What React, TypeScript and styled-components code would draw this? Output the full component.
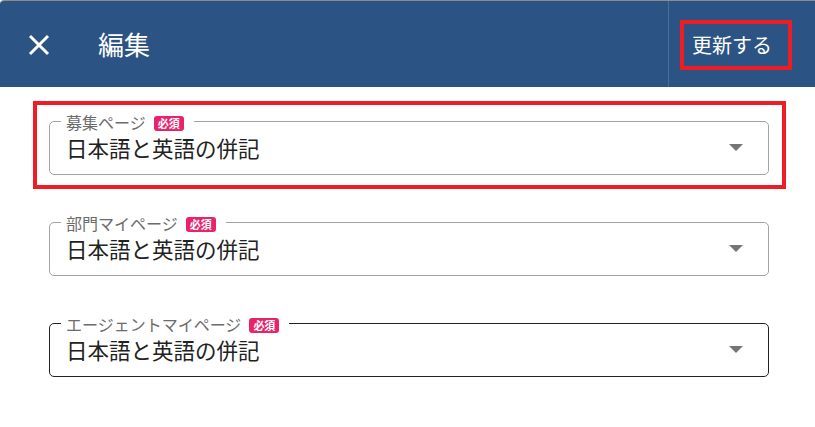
import React from "react";
import styled, { createGlobalStyle } from "styled-components";

const GlobalStyle = createGlobalStyle`
  html, body { margin: 0; padding: 0; background: #ffffff; }
  body { font-family: "Noto Sans CJK JP", "Noto Sans", sans-serif; }
  * { box-sizing: border-box; }
`;

const Dialog = styled.div`
  width: 815px;
  height: 427px;
  border-top: 1px solid #8c8c8c;
  border-top-left-radius: 4px;
  overflow: hidden;
  background: #ffffff;
`;

const Header = styled.header`
  display: flex;
  align-items: stretch;
  height: 86px;
  background: #2b5383;
  color: #ffffff;
`;

const HeaderLeft = styled.div`
  flex: 1;
  display: flex;
  align-items: center;
  padding-left: 28px;
`;

const CloseButton = styled.button`
  display: flex;
  align-items: center;
  justify-content: center;
  padding: 0;
  margin-top: 2px;
  border: none;
  background: transparent;
  cursor: pointer;
`;

const Title = styled.h1`
  margin: 0 0 0 48px;
  font-size: 26px;
  font-weight: 400;
  line-height: 1;
  letter-spacing: 0;
`;

const HeaderRight = styled.div`
  display: flex;
  align-items: center;
  border-left: 1px solid #4c6d99;
  padding: 2px 23px 0 11px;
`;

const UpdateButton = styled.button<{ $highlighted?: boolean }>`
  display: flex;
  align-items: center;
  width: 112px;
  height: 50px;
  padding: 0 0 0 8px;
  border: 4px solid ${(p) => (p.$highlighted ? "#ee1c25" : "transparent")};
  background: transparent;
  color: #ffffff;
  font-family: inherit;
  font-size: 20px;
  line-height: 1;
  cursor: pointer;
`;

const Content = styled.main`
  display: flex;
  flex-direction: column;
  gap: 13px;
  padding: 14px 0 0 33px;
`;

const FieldBlock = styled.div<{ $highlighted?: boolean }>`
  width: 753px;
  padding: 8px 13px 10px 12px;
  border: 4px solid ${(p) => (p.$highlighted ? "#ee1c25" : "transparent")};
`;

const Outline = styled.fieldset<{ $active?: boolean }>`
  margin: 0;
  min-width: 0;
  padding: 0 16px;
  border: 1px solid ${(p) => (p.$active ? "#222222" : "#a3a3a3")};
  border-radius: 5px;
`;

const Legend = styled.legend`
  display: flex;
  align-items: center;
  height: 16px;
  margin-left: -5px;
  padding: 0 10px 0 5px;
`;

const LabelText = styled.span`
  font-size: 16px;
  line-height: 16px;
  color: #6b6b6b;
  margin-top: 2px;
`;

const RequiredBadge = styled.span`
  display: inline-flex;
  align-items: center;
  justify-content: center;
  width: 30px;
  height: 15px;
  margin: 4px 0 0 8px;
  border-radius: 3px;
  background: #e8236a;
  color: #ffffff;
  font-size: 11px;
  font-weight: 700;
  line-height: 1;
`;

const SelectRow = styled.div`
  display: flex;
  align-items: center;
  justify-content: space-between;
  height: 37px;
  margin-bottom: 8px;
`;

const Value = styled.span`
  font-size: 21.5px;
  line-height: 1;
  color: #222222;
`;

const Arrow = styled.svg`
  width: 14px;
  height: 8px;
  margin-right: 9px;
  flex: none;
`;

type Field = { label: string; value: string; highlighted?: boolean; active?: boolean };

const fields: Field[] = [
  { label: "募集ページ", value: "日本語と英語の併記", highlighted: true },
  { label: "部門マイページ", value: "日本語と英語の併記" },
  { label: "エージェントマイページ", value: "日本語と英語の併記", active: true },
];

export default function App() {
  return (
    <>
      <GlobalStyle />
      <Dialog>
        <Header>
          <HeaderLeft>
            <CloseButton aria-label="閉じる">
              <svg width="22" height="22" viewBox="0 0 22 22">
                <path d="M2 2 L20 20 M20 2 L2 20" stroke="#ffffff" strokeWidth="3" fill="none" />
              </svg>
            </CloseButton>
            <Title>編集</Title>
          </HeaderLeft>
          <HeaderRight>
            <UpdateButton $highlighted>更新する</UpdateButton>
          </HeaderRight>
        </Header>
        <Content>
          {fields.map((f) => (
            <FieldBlock key={f.label} $highlighted={f.highlighted}>
              <Outline $active={f.active}>
                <Legend>
                  <LabelText>{f.label}</LabelText>
                  <RequiredBadge>必須</RequiredBadge>
                </Legend>
                <SelectRow>
                  <Value>{f.value}</Value>
                  <Arrow viewBox="0 0 14 8">
                    <path d="M0 0 L14 0 L7 7 Z" fill="#757575" />
                  </Arrow>
                </SelectRow>
              </Outline>
            </FieldBlock>
          ))}
        </Content>
      </Dialog>
    </>
  );
}
